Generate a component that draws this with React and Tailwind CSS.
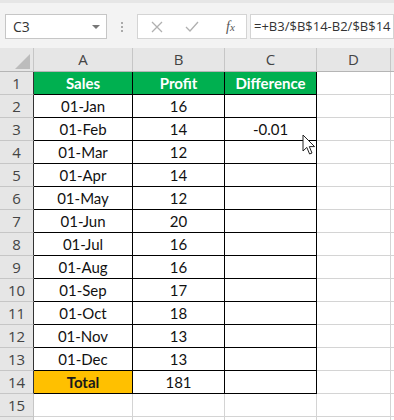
import React from 'react';

const rows = [
  ['Sales', 'Profit', 'Difference'],
  ['01-Jan', '16', ''],
  ['01-Feb', '14', '-0.01'],
  ['01-Mar', '12', ''],
  ['01-Apr', '14', ''],
  ['01-May', '12', ''],
  ['01-Jun', '20', ''],
  ['01-Jul', '16', ''],
  ['01-Aug', '16', ''],
  ['01-Sep', '17', ''],
  ['01-Oct', '18', ''],
  ['01-Nov', '13', ''],
  ['01-Dec', '13', ''],
  ['Total', '181', ''],
];

const Cursor = () => (
  <svg className="absolute left-[302px] top-[134px]" width="14" height="22" viewBox="0 0 14 22">
    <path
      d="M1 1 L1 17 L4.8 13.4 L7.6 20 L10 19 L7.3 12.6 L12.6 12.6 Z"
      fill="#fff"
      stroke="#222"
      strokeWidth="1"
      strokeLinejoin="round"
    />
  </svg>
);

const App = () => {
  return (
    <div className="relative w-[394px] h-[420px] overflow-hidden bg-white font-['Lato',sans-serif]">
      {/* formula bar */}
      <div className="h-[48px] bg-[#f3f3f3] border-t-[3px] border-[#e6e6e6] flex items-center pl-[5px] pt-[2px]">
        <div className="w-[102px] h-[25px] bg-white border border-[#c6c6c6] flex items-center justify-between pl-[7px] pr-[6px] font-['Open_Sans',sans-serif] text-[14px] text-[#333]">
          <span>C3</span>
          <span className="w-0 h-0 border-l-[4px] border-r-[4px] border-t-[4px] border-l-transparent border-r-transparent border-t-[#777]"></span>
        </div>
        <div className="w-[30px] flex flex-col items-center gap-[2px]">
          <span className="w-[2px] h-[2px] bg-[#aaa]"></span>
          <span className="w-[2px] h-[2px] bg-[#aaa]"></span>
          <span className="w-[2px] h-[2px] bg-[#aaa]"></span>
        </div>
        <div className="w-[110px] h-[25px] bg-white border border-[#d4d4d4] flex items-center pl-[13px]">
          <svg width="12" height="12" viewBox="0 0 12 12">
            <path d="M1 1 L11 11 M11 1 L1 11" stroke="#b0b0b0" strokeWidth="1.3" />
          </svg>
          <svg className="ml-[22px]" width="14" height="12" viewBox="0 0 14 12">
            <path d="M1 6 L5 10 L13 1" stroke="#b0b0b0" strokeWidth="1.3" fill="none" />
          </svg>
          <span className="ml-[27px] font-['Liberation_Serif',serif] italic text-[14px] text-[#555]">
            f<span className="text-[11px]">x</span>
          </span>
        </div>
        <div className="flex-1 h-[25px] ml-[3px] bg-white border border-[#d4d4d4] flex items-center pl-[3px] whitespace-nowrap overflow-hidden font-['Open_Sans',sans-serif] text-[13px] text-[#333]">
          =+B3/$B$14-B2/$B$14
        </div>
      </div>

      {/* column headers */}
      <div className="flex h-[24px] bg-[#e6e6e6] border-b border-[#b5b5b5] font-['Open_Sans',sans-serif] text-[15px] text-[#444]">
        <div className="w-[34px] border-r border-[#c6c6c6] relative">
          <svg className="absolute left-[15px] top-[6px]" width="15" height="15" viewBox="0 0 15 15">
            <path d="M15 0 L15 15 L0 15 Z" fill="#bcbcbc" />
          </svg>
        </div>
        <div className="w-[99px] border-r border-[#c6c6c6] flex items-center justify-center">A</div>
        <div className="w-[92px] border-r border-[#c6c6c6] flex items-center justify-center">B</div>
        <div className="w-[92px] border-r border-[#c6c6c6] flex items-center justify-center">C</div>
        <div className="w-[74px] border-r border-[#c6c6c6] flex items-center justify-center">D</div>
        <div className="flex-1"></div>
      </div>

      {/* rows */}
      {rows.map((r, i) => {
        const isHead = i === 0;
        const isTotal = i === rows.length - 1;
        return (
          <div key={i} className="flex h-[23px] text-[15px] text-[#111]">
            <div className="w-[34px] bg-[#e6e6e6] border-r border-r-[#333] border-b border-b-[#c6c6c6] flex items-center justify-center font-['Open_Sans',sans-serif] text-[15px] text-[#444]">
              {i + 1}
            </div>
            <div
              className={`w-[99px] border-r border-b border-black flex items-center justify-center ${
                isHead ? 'bg-[#00b050] text-white font-bold' : isTotal ? 'bg-[#ffc000] font-bold text-[#1a1a1a]' : ''
              }`}
            >
              {r[0]}
            </div>
            <div
              className={`w-[92px] border-r border-b border-black flex items-center justify-center ${
                isHead ? 'bg-[#00b050] text-white font-bold' : ''
              }`}
            >
              {r[1]}
            </div>
            <div
              className={`w-[92px] border-r border-b border-black flex items-center justify-center ${
                isHead ? 'bg-[#00b050] text-white font-bold' : ''
              }`}
            >
              {r[2]}
            </div>
            <div className="w-[74px] border-r border-b border-[#d4d4d4]"></div>
            <div className="flex-1 border-b border-[#d4d4d4]"></div>
          </div>
        );
      })}
      <div className="flex h-[23px]">
        <div className="w-[34px] bg-[#e6e6e6] border-r border-b border-[#c6c6c6] flex items-center justify-center font-['Open_Sans',sans-serif] text-[15px] text-[#444]">
          15
        </div>
        <div className="w-[99px] border-r border-b border-[#d4d4d4]"></div>
        <div className="w-[92px] border-r border-b border-[#d4d4d4]"></div>
        <div className="w-[92px] border-r border-b border-[#d4d4d4]"></div>
        <div className="w-[74px] border-r border-b border-[#d4d4d4]"></div>
        <div className="flex-1 border-b border-[#d4d4d4]"></div>
      </div>
      <div className="flex h-[10px]">
        <div className="w-[34px] bg-[#e6e6e6] border-r border-[#c6c6c6]"></div>
        <div className="w-[99px] border-r border-[#d4d4d4]"></div>
        <div className="w-[92px] border-r border-[#d4d4d4]"></div>
        <div className="w-[92px] border-r border-[#d4d4d4]"></div>
        <div className="w-[74px] border-r border-[#d4d4d4]"></div>
        <div className="flex-1"></div>
      </div>
      <Cursor />
    </div>
  );
};

export default App;
